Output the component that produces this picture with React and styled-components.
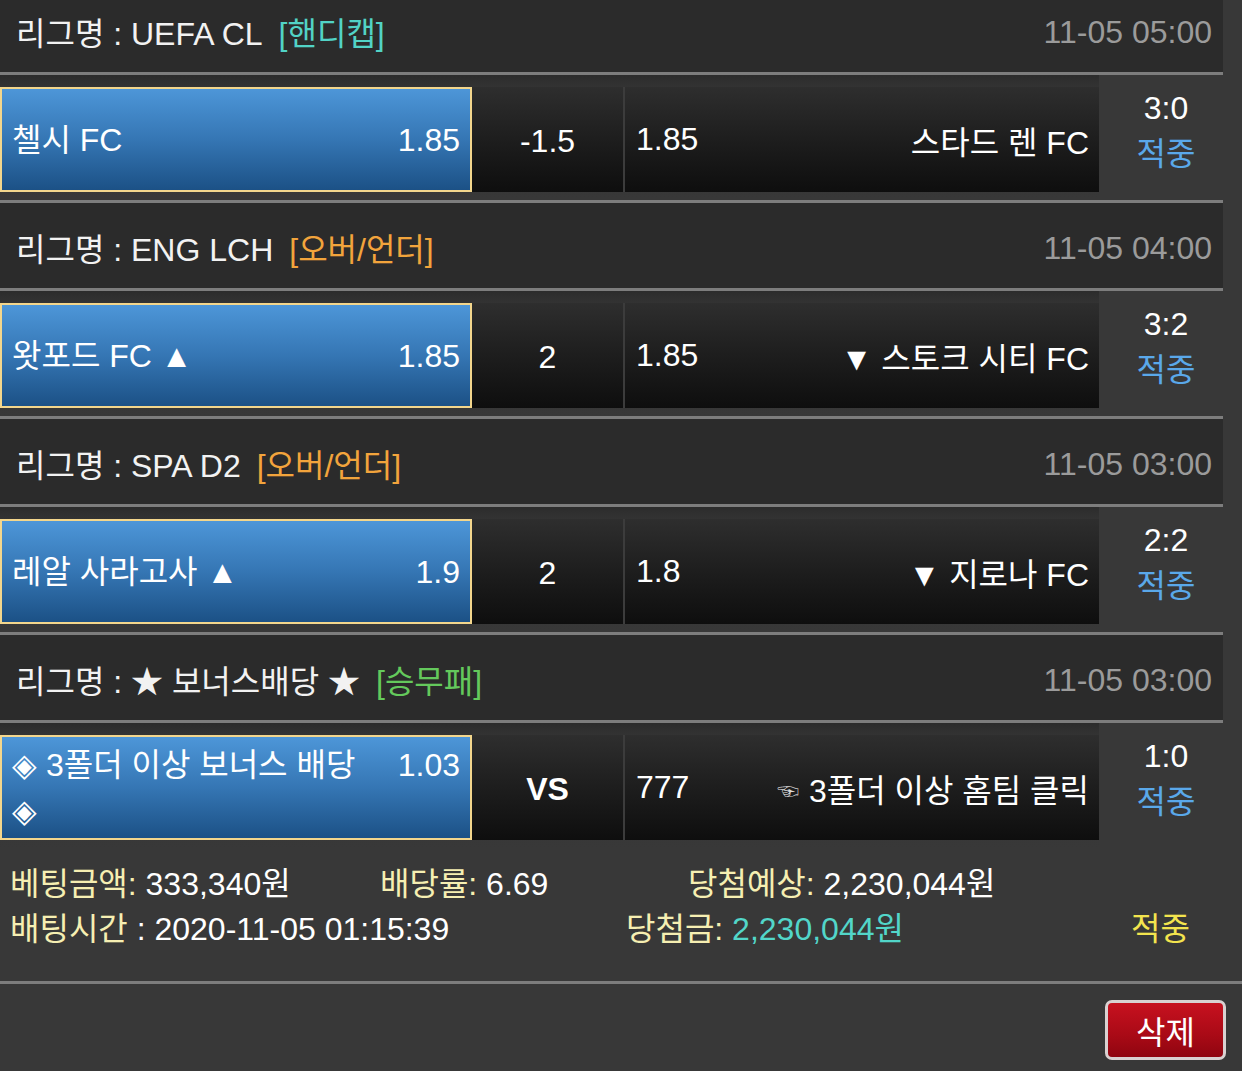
import React from 'react';
import styled, { createGlobalStyle } from 'styled-components';

const GlobalStyle = createGlobalStyle`
  html, body {
    margin: 0;
    padding: 0;
    background: #383838;
  }
  body {
    font-family: "Liberation Sans", "Noto Sans CJK KR", sans-serif;
    overflow: hidden;
  }
`;

const labelColors = {
  handicap: '#52d3c6',
  overunder: '#f2a43c',
  winlose: '#64c95c',
};

const Page = styled.div`
  width: 1242px;
  height: 1071px;
  background: #383838;
  color: #fff;
  font-size: 32px;
  overflow: hidden;
`;

const List = styled.div`
  width: 1223px;
  margin-top: -13px;
`;

const LeagueHeader = styled.div`
  height: 85px;
  box-sizing: border-box;
  padding: 3px 11px 0 16px;
  display: flex;
  align-items: center;
  justify-content: space-between;
  background: #2b2b2b;
`;

const LeagueName = styled.div`
  color: #f2f2f2;
`;

const BetLabel = styled.span`
  margin-left: 16px;
  color: ${(p) => labelColors[p.$kind]};
`;

const MatchTime = styled.div`
  color: #9b9b9b;
  padding-top: 3px;
`;

const Separator = styled.div`
  height: 3px;
  background: #7d7d7d;
  width: ${(p) => (p.$full ? '1242px' : '100%')};
`;

const MatchRow = styled.div`
  height: 125px;
  display: flex;
`;

const Cells = styled.div`
  flex: 0 0 1099px;
  display: flex;
  box-sizing: border-box;
  padding: 12px 0 8px;
  background: linear-gradient(to bottom, #2c2c2c 0, #333 12px, #383838 100%);
`;

const HomeCell = styled.div`
  flex: 0 0 472px;
  box-sizing: border-box;
  border: 2px solid #f3d68c;
  background: linear-gradient(to bottom, #4d96d8 0%, #3576b4 50%, #1c5186 100%);
  display: flex;
  align-items: center;
  padding: 0 10px;
`;

const HomeInner = styled.div`
  flex: 1;
  display: flex;
  align-items: baseline;
  justify-content: space-between;
  line-height: 46px;
`;

const TeamName = styled.span`
  max-width: ${(p) => (p.$narrow ? '360px' : 'none')};
`;

const DarkCell = styled.div`
  background: linear-gradient(to bottom, #2e2e2e 0%, #1c1c1c 55%, #0e0e0e 100%);
  display: flex;
  align-items: center;
`;

const LineCell = styled(DarkCell)`
  flex: 0 0 151px;
  justify-content: center;
  padding-top: 4px;
  box-sizing: border-box;
  font-weight: ${(p) => (p.$bold ? 700 : 400)};
`;

const AwayCell = styled(DarkCell)`
  flex: 1;
  border-left: 2px solid #3c3c3c;
  justify-content: space-between;
  padding: 0 10px 0 11px;
`;

const Pointer = styled.span`
  font-size: 22px;
  color: #d8d8d8;
  margin-right: 10px;
  vertical-align: 3px;
`;

const ScoreCol = styled.div`
  flex: 1;
  display: flex;
  flex-direction: column;
  align-items: center;
  padding: 10px 0 0 10px;
  line-height: 46px;
`;

const Hit = styled.div`
  color: ${(p) => p.$color};
`;

const Summary = styled.div`
  padding: 14px 0 29px 10px;
`;

const SummaryRow = styled.div`
  display: flex;
  line-height: 45px;
  white-space: nowrap;
`;

const SummaryItem = styled.div`
  flex: 0 0 ${(p) => p.$w || 'auto'};
`;

const Label = styled.span`
  color: #f6efb2;
`;

const Value = styled.span`
  color: ${(p) => p.$color || '#fff'};
`;

const Footer = styled.div`
  display: flex;
  justify-content: flex-end;
  padding: 16px 16px 0 0;
`;

const DeleteButton = styled.button`
  width: 121px;
  height: 60px;
  border: 3px solid #d9d1d1;
  border-radius: 7px;
  background: linear-gradient(to bottom, #c7111f 0%, #a90a16 60%, #8f0510 100%);
  color: #fff;
  font-family: inherit;
  font-size: 32px;
  padding: 0;
`;

const matches = [
  {
    league: 'UEFA CL',
    kind: 'handicap',
    label: '[핸디캡]',
    time: '11-05 05:00',
    home: '첼시 FC',
    homeOdds: '1.85',
    line: '-1.5',
    awayOdds: '1.85',
    away: '스타드 렌 FC',
    score: '3:0',
  },
  {
    league: 'ENG LCH',
    kind: 'overunder',
    label: '[오버/언더]',
    time: '11-05 04:00',
    home: '왓포드 FC ▲',
    homeOdds: '1.85',
    line: '2',
    awayOdds: '1.85',
    away: '▼ 스토크 시티 FC',
    score: '3:2',
  },
  {
    league: 'SPA D2',
    kind: 'overunder',
    label: '[오버/언더]',
    time: '11-05 03:00',
    home: '레알 사라고사 ▲',
    homeOdds: '1.9',
    line: '2',
    awayOdds: '1.8',
    away: '▼ 지로나 FC',
    score: '2:2',
  },
  {
    league: '★ 보너스배당 ★',
    kind: 'winlose',
    label: '[승무패]',
    time: '11-05 03:00',
    home: '◈ 3폴더 이상 보너스 배당 ◈',
    homeOdds: '1.03',
    line: 'VS',
    awayOdds: '777',
    away: '3폴더 이상 홈팀 클릭',
    pointer: true,
    score: '1:0',
    bonus: true,
  },
];

function Match({ m, last }) {
  return (
    <>
      <LeagueHeader>
        <LeagueName>
          리그명 : {m.league}
          <BetLabel $kind={m.kind}>{m.label}</BetLabel>
        </LeagueName>
        <MatchTime>{m.time}</MatchTime>
      </LeagueHeader>
      <Separator />
      <MatchRow>
        <Cells>
          <HomeCell>
            <HomeInner>
              <TeamName $narrow={m.bonus}>{m.home}</TeamName>
              <span>{m.homeOdds}</span>
            </HomeInner>
          </HomeCell>
          <LineCell $bold={m.bonus}>{m.line}</LineCell>
          <AwayCell>
            <span>{m.awayOdds}</span>
            <span>
              {m.pointer && <Pointer>☜</Pointer>}
              {m.away}
            </span>
          </AwayCell>
        </Cells>
        <ScoreCol>
          <div>{m.score}</div>
          <Hit $color="#5aa8ea">적중</Hit>
        </ScoreCol>
      </MatchRow>
      {!last && <Separator />}
    </>
  );
}

export default function App() {
  return (
    <Page>
      <GlobalStyle />
      <List>
        {matches.map((m, i) => (
          <Match key={i} m={m} last={i === matches.length - 1} />
        ))}
      </List>
      <Summary>
        <SummaryRow>
          <SummaryItem $w="370px">
            <Label>베팅금액:</Label> <Value>333,340원</Value>
          </SummaryItem>
          <SummaryItem $w="308px">
            <Label>배당률:</Label> <Value>6.69</Value>
          </SummaryItem>
          <SummaryItem>
            <Label>당첨예상:</Label> <Value>2,230,044원</Value>
          </SummaryItem>
        </SummaryRow>
        <SummaryRow>
          <SummaryItem $w="616px">
            <Label>배팅시간</Label> <Value>: 2020-11-05 01:15:39</Value>
          </SummaryItem>
          <SummaryItem $w="505px">
            <Label>당첨금:</Label> <Value $color="#52d6c9">2,230,044원</Value>
          </SummaryItem>
          <SummaryItem>
            <Hit $color="#f3e44e">적중</Hit>
          </SummaryItem>
        </SummaryRow>
      </Summary>
      <Separator $full />
      <Footer>
        <DeleteButton>삭제</DeleteButton>
      </Footer>
    </Page>
  );
}
